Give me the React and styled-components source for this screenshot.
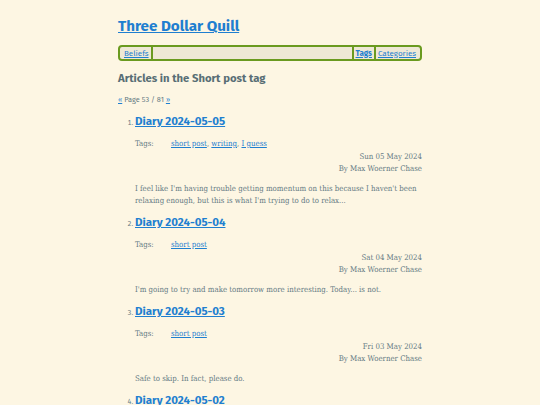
import styled, { createGlobalStyle } from "styled-components";

const serif = `"Roboto Slab", "DejaVu Serif Condensed", "DejaVu Serif", serif`;
const sans = `"Fira Sans", Lato, sans-serif`;

const GlobalStyle = createGlobalStyle`
  html, body {
    margin: 0;
    padding: 0;
    background: #fdf6e3;
  }
  body {
    font-family: ${serif};
    color: #657b83;
  }
  a {
    color: #1f7fd0;
  }
`;

const Page = styled.div`
  width: 304px;
  margin: 0 auto;
  padding-top: 14px;
`;

const SiteTitle = styled.h1`
  margin: 0;
  font-family: ${sans};
  font-size: 15.2px;
  line-height: 24px;
  font-weight: 700;
`;

const Nav = styled.nav`
  margin-top: 7px;
  height: 12px;
  display: flex;
  align-items: center;
  background: #eee8d5;
  border: 2px solid #6a9a1f;
  border-radius: 4px;
  font-family: ${sans};
  font-size: 8px;
  padding: 0 2px;
`;

const NavLink = styled.a`
  padding: 0 2px;
  font-weight: ${(p) => (p.$current ? 700 : 400)};
`;

const Sep = styled.span`
  width: 2px;
  height: 12px;
  background: #6a9a1f;
`;

const Spacer = styled.span`
  flex: 1;
`;

const Heading = styled.h2`
  margin: 8px 0 0;
  font-family: ${sans};
  font-size: 11.3px;
  line-height: 18px;
  font-weight: 700;
  color: #586e75;
`;

const Pager = styled.p`
  margin: 8px 0 0;
  font-family: ${sans};
  font-size: 7.4px;
  line-height: 10px;
  color: #657b83;
`;

const List = styled.ol`
  margin: 7px 0 0;
  padding-left: 17px;
  font-family: ${sans};
  font-size: 7px;
  color: #657b83;
`;

const Item = styled.li`
  margin-bottom: 6px;
`;

const PostTitle = styled.h3`
  display: inline;
  margin: 0;
  font-family: ${sans};
  font-size: 11.5px;
  line-height: 18px;
  font-weight: 700;
`;

const Tags = styled.div`
  display: flex;
  margin-top: 8px;
  font-family: ${serif};
  font-size: 7.8px;
  line-height: 12px;
`;

const TagLabel = styled.span`
  width: 36px;
`;

const Meta = styled.div`
  margin-top: 1px;
  text-align: right;
  font-family: ${serif};
  font-size: 7.8px;
  line-height: 12px;
`;

const Excerpt = styled.p`
  margin: 8px 0 0;
  font-family: ${serif};
  font-size: 7.8px;
  line-height: 12px;
`;

const posts = [
  {
    title: "Diary 2024-05-05",
    tags: ["short post", "writing", "I guess"],
    date: "Sun 05 May 2024",
    text: "I feel like I'm having trouble getting momentum on this because I haven't been relaxing enough, but this is what I'm trying to do to relax...",
  },
  {
    title: "Diary 2024-05-04",
    tags: ["short post"],
    date: "Sat 04 May 2024",
    text: "I'm going to try and make tomorrow more interesting. Today... is not.",
  },
  {
    title: "Diary 2024-05-03",
    tags: ["short post"],
    date: "Fri 03 May 2024",
    text: "Safe to skip. In fact, please do.",
  },
  {
    title: "Diary 2024-05-02",
    tags: ["short post"],
    date: "Thu 02 May 2024",
    text: "Another day.",
  },
];

export default function App() {
  return (
    <>
      <GlobalStyle />
      <Page>
        <SiteTitle>
          <a href="#">Three Dollar Quill</a>
        </SiteTitle>
        <Nav>
          <NavLink href="#">Beliefs</NavLink>
          <Sep />
          <Spacer />
          <Sep />
          <NavLink href="#" $current>
            Tags
          </NavLink>
          <Sep />
          <NavLink href="#">Categories</NavLink>
        </Nav>
        <Heading>Articles in the Short post tag</Heading>
        <Pager>
          <a href="#">«</a> Page 53 / 81 <a href="#">»</a>
        </Pager>
        <List>
          {posts.map((p) => (
            <Item key={p.title}>
              <PostTitle>
                <a href="#">{p.title}</a>
              </PostTitle>
              <Tags>
                <TagLabel>Tags:</TagLabel>
                <span>
                  {p.tags.map((t, i) => (
                    <span key={t}>
                      <a href="#">{t}</a>
                      {i < p.tags.length - 1 ? ", " : ""}
                    </span>
                  ))}
                </span>
              </Tags>
              <Meta>
                {p.date}
                <br />
                By Max Woerner Chase
              </Meta>
              <Excerpt>{p.text}</Excerpt>
            </Item>
          ))}
        </List>
      </Page>
    </>
  );
}
